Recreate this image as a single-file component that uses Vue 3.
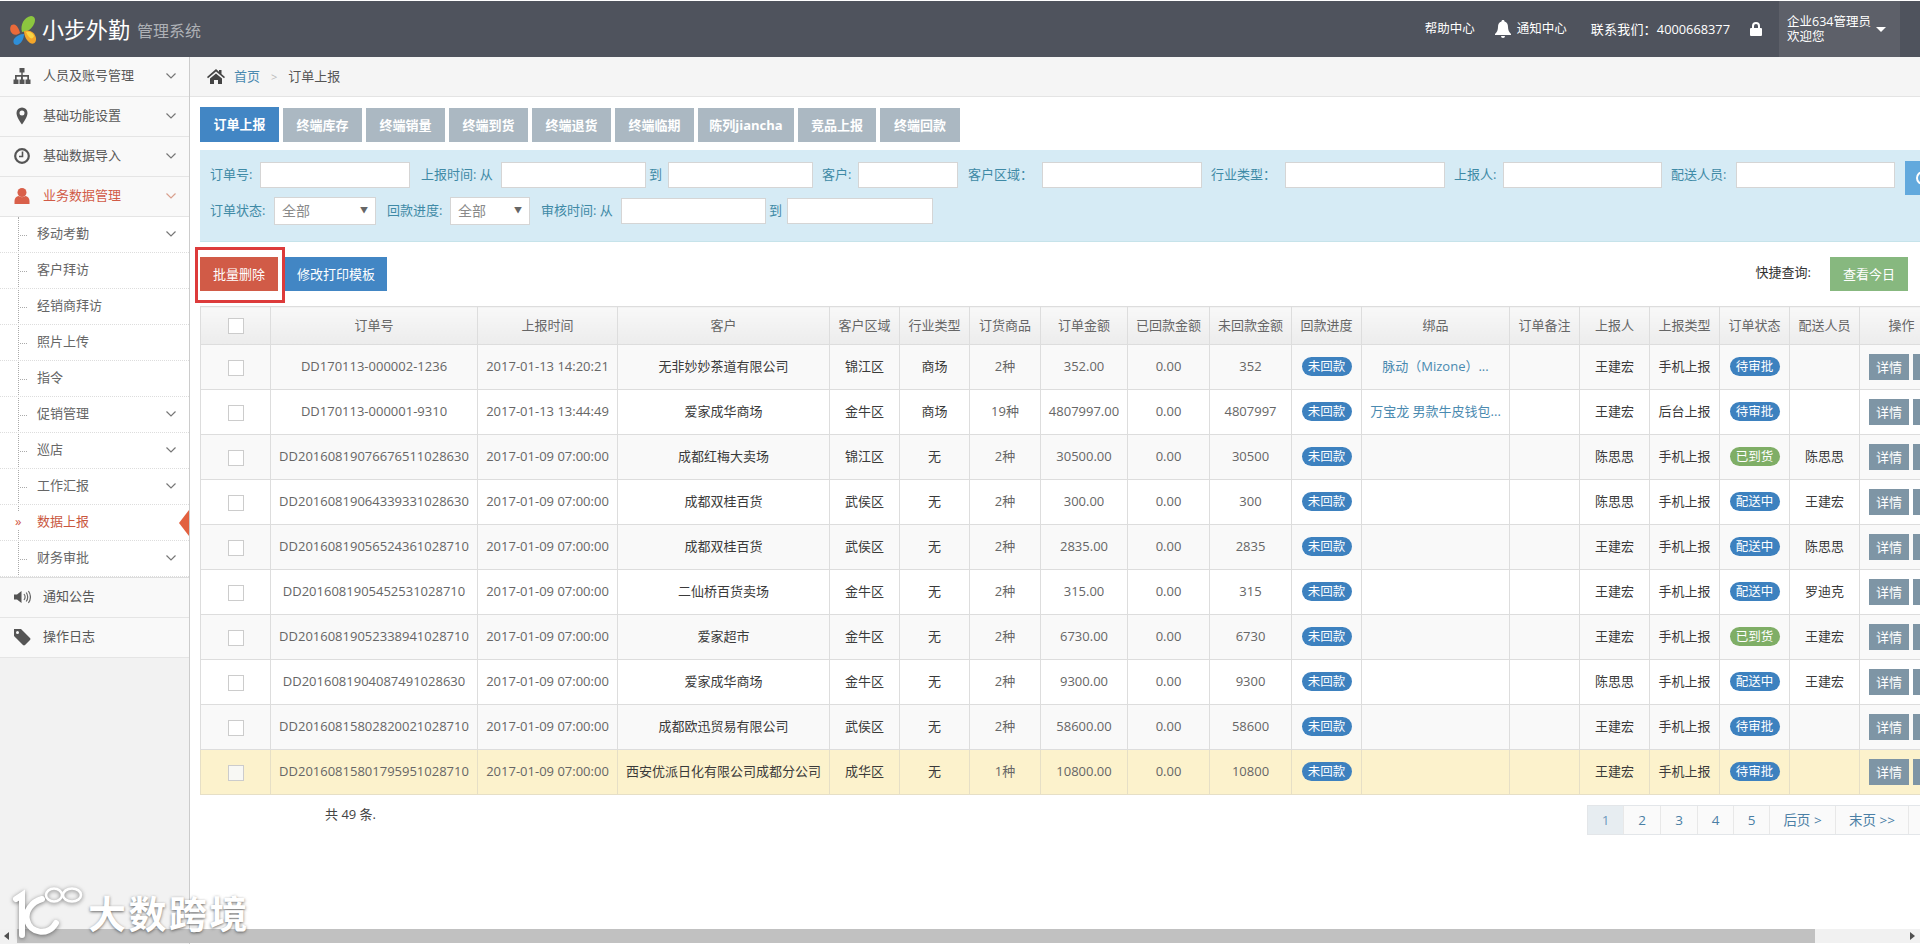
<script setup>
const sideTop = [
  { t: '人员及账号管理', i: 'org' },
  { t: '基础功能设置', i: 'pin' },
  { t: '基础数据导入', i: 'clock' },
  { t: '业务数据管理', i: 'user', active: true }
]
const subs = [
  { t: '移动考勤', c: 1 }, { t: '客户拜访' }, { t: '经销商拜访' }, { t: '照片上传' }, { t: '指令' },
  { t: '促销管理', c: 1 }, { t: '巡店', c: 1 }, { t: '工作汇报', c: 1 }, { t: '数据上报', active: 1 }, { t: '财务审批', c: 1 }
]
const tabs = [
  { t: '订单上报', w: 79, active: 1 }, { t: '终端库存', w: 79 }, { t: '终端销量', w: 79 }, { t: '终端到货', w: 79 },
  { t: '终端退货', w: 79 }, { t: '终端临期', w: 79 }, { t: '陈列jiancha', w: 96 }, { t: '竞品上报', w: 78 }, { t: '终端回款', w: 80 }
]
const row1 = [
  { l: '订单号:', lw: 50, iw: 150, ml: 0 },
  { l: '上报时间: 从', lw: 80, iw: 145, ml: 11 },
  { l: '到', lw: 22, iw: 145, ml: 0, center: 1 },
  { l: '客户:', lw: 36, iw: 100, ml: 9 },
  { l: '客户区域：', lw: 74, iw: 160, ml: 10 },
  { l: '行业类型：', lw: 74, iw: 160, ml: 9 },
  { l: '上报人:', lw: 49, iw: 159, ml: 9 },
  { l: '配送人员:', lw: 65, iw: 159, ml: 9 }
]
const cols = [70, 207, 140, 212, 70, 70, 71, 87, 82, 82, 70, 148, 70, 70, 70, 70, 70, 84]
const heads = ['', '订单号', '上报时间', '客户', '客户区域', '行业类型', '订货商品', '订单金额', '已回款金额', '未回款金额', '回款进度', '绑品', '订单备注', '上报人', '上报类型', '订单状态', '配送人员', '操作']
const rows = [
  ['DD170113-000002-1236', '2017-01-13 14:20:21', '无非妙妙茶道有限公司', '锦江区', '商场', '2种', '352.00', '352', '脉动（Mizone）...', '王建宏', '手机上报', '待审批', ''],
  ['DD170113-000001-9310', '2017-01-13 13:44:49', '爱家成华商场', '金牛区', '商场', '19种', '4807997.00', '4807997', '万宝龙 男款牛皮钱包...', '王建宏', '后台上报', '待审批', ''],
  ['DD20160819076676511028630', '2017-01-09 07:00:00', '成都红梅大卖场', '锦江区', '无', '2种', '30500.00', '30500', '', '陈思思', '手机上报', '已到货', '陈思思'],
  ['DD20160819064339331028630', '2017-01-09 07:00:00', '成都双桂百货', '武侯区', '无', '2种', '300.00', '300', '', '陈思思', '手机上报', '配送中', '王建宏'],
  ['DD20160819056524361028710', '2017-01-09 07:00:00', '成都双桂百货', '武侯区', '无', '2种', '2835.00', '2835', '', '王建宏', '手机上报', '配送中', '陈思思'],
  ['DD2016081905452531028710', '2017-01-09 07:00:00', '二仙桥百货卖场', '金牛区', '无', '2种', '315.00', '315', '', '王建宏', '手机上报', '配送中', '罗迪克'],
  ['DD20160819052338941028710', '2017-01-09 07:00:00', '爱家超市', '金牛区', '无', '2种', '6730.00', '6730', '', '王建宏', '手机上报', '已到货', '王建宏'],
  ['DD2016081904087491028630', '2017-01-09 07:00:00', '爱家成华商场', '金牛区', '无', '2种', '9300.00', '9300', '', '陈思思', '手机上报', '配送中', '王建宏'],
  ['DD20160815802820021028710', '2017-01-09 07:00:00', '成都欧迅贸易有限公司', '武侯区', '无', '2种', '58600.00', '58600', '', '王建宏', '手机上报', '待审批', ''],
  ['DD20160815801795951028710', '2017-01-09 07:00:00', '西安优派日化有限公司成都分公司', '成华区', '无', '1种', '10800.00', '10800', '', '王建宏', '手机上报', '待审批', '']
]
const pages = [
  { t: '1', w: 36, on: 1 }, { t: '2', w: 37 }, { t: '3', w: 37 }, { t: '4', w: 36 }, { t: '5', w: 36 },
  { t: '后页 >', w: 66 }, { t: '末页 >>', w: 73 }, { t: '每页', w: 60 }
]
</script>

<template>
  <div class="page">
    <header class="top">
      <div class="brand">
        <svg class="logo" viewBox="0 0 30 34" width="30" height="34">
          <path d="M13 19C11 12 15 4 22 3c4 0 5 4 3 8-2 5-7 8-12 8z" fill="#8cc63f" />
          <path d="M11 20c-4 3-8 2-9.500-2C0.500 14 2 11 5 11.500c3 .5 5 4.500 6 8.500z" fill="#ea6a3a" />
          <path d="M15 21c0 5-3 10-7 11-3 0-4.500-3-3-6 2-3 6-5 10-5z" fill="#2f8fd8" />
          <path d="M15 18c5-2 11 1 12 7 .5 4-2 7-6 5-3-2-6-7-6-12z" fill="#f4a62a" />
          <path d="M17 19c4-1 7 1 8 4-1 3-3 3-5 1-1-1-2-3-3-5z" fill="#f8d444" />
        </svg>
        <span class="brand-name">小步外勤</span>
        <span class="brand-sub">管理系统</span>
      </div>
      <div class="top-right">
        <span class="tl help">帮助中心</span>
        <svg class="bell" viewBox="0 0 16 18" width="16" height="18"><path fill="#fff" d="M8 0c1 0 1.500.6 1.500 1.400C12 2 13 4 13 7c0 3 1 5 3 7v1H0v-1c2-2 3-4 3-7 0-3 1-5 3.500-5.600C6.500.6 7 0 8 0zM6 16h4a2 2 0 0 1-4 0z"/></svg>
        <span class="tl notice">通知中心</span>
        <span class="tl contact">联系我们：<b class="tel">4000668377</b></span>
        <svg class="lock" viewBox="0 0 12 14" width="12" height="14"><path fill="#fff" d="M2 6V4a4 4 0 0 1 8 0v2h1a1 1 0 0 1 1 1v6a1 1 0 0 1-1 1H1a1 1 0 0 1-1-1V7a1 1 0 0 1 1-1zm2 0h4V4a2 2 0 0 0-4 0z"/></svg>
        <div class="user">
          <div class="user-text"><div>企业634管理员</div><div>欢迎您</div></div>
          <i class="caret"></i>
        </div>
      </div>
    </header>

    <div class="body">
      <aside class="side">
        <div v-for="s in sideTop" :key="s.t" class="s-item" :class="{ on: s.active }">
          <svg class="s-icon" viewBox="0 0 18 18" width="18" height="18">
            <path v-if="s.i === 'org'" fill="#555" d="M6.500 1h5v4.500H9.700V8H16v4.500h1.500V17h-5v-4.500H14.300V9.800H9.900v2.700h1.600V17h-5v-4.500h1.500V9.800H3.700v2.700h1.800V17h-5v-4.500H2V8h6.300V5.500H6.500z"/>
            <path v-else-if="s.i === 'pin'" fill="#555" fill-rule="evenodd" d="M9 0.500a5.500 5.500 0 0 1 5.500 5.500c0 3.500-3 8-5.500 11.500C6.500 14 3.500 9.500 3.500 6A5.500 5.500 0 0 1 9 0.500zm0 3a2.500 2.500 0 1 0 0 5 2.500 2.500 0 0 0 0-5z"/>
            <g v-else-if="s.i === 'clock'"><circle cx="9" cy="9" r="6.800" fill="none" stroke="#555" stroke-width="2.200"/><path d="M9.500 4.500v5H6" fill="none" stroke="#555" stroke-width="1.600"/></g>
            <g v-else fill="#d9604a"><circle cx="9" cy="5.500" r="4.500"/><path d="M1.500 17v-3c0-3 2-4.500 4-5 2 1.500 5 1.500 7 0 2 .5 4 2 4 5v3z"/></g>
          </svg>
          <span class="s-text">{{ s.t }}</span>
          <svg class="chev" viewBox="0 0 10 6" width="10" height="6"><path d="M0.500.5 5 5l4.500-4.500" fill="none" :stroke="s.active ? '#d9a18f' : '#777'" stroke-width="1.200"/></svg>
        </div>
        <div class="subs">
          <div v-for="s in subs" :key="s.t" class="sub" :class="{ on: s.active }">
            <i v-if="!s.active" class="tick"></i>
            <i v-else class="raquo">»</i>
            <span>{{ s.t }}</span>
            <svg v-if="s.c" class="chev" viewBox="0 0 10 6" width="10" height="6"><path d="M0.500.5 5 5l4.500-4.500" fill="none" stroke="#777" stroke-width="1.200"/></svg>
            <i v-if="s.active" class="pointer"></i>
          </div>
        </div>
        <div class="s-item">
          <svg class="s-icon" viewBox="0 0 18 18" width="18" height="18"><path fill="#555" d="M1 6.500h3L8.500 3v12L4 11.500H1z"/><path d="M11 6c1.200 1.600 1.200 4.400 0 6M13.200 4.500c2 2.500 2 6.500 0 9M15.400 3c2.700 3.500 2.700 8.500 0 12" fill="none" stroke="#666" stroke-width="1.200"/></svg>
          <span class="s-text">通知公告</span>
        </div>
        <div class="s-item">
          <svg class="s-icon" viewBox="0 0 18 18" width="18" height="18"><path fill="#555" fill-rule="evenodd" d="M1 1h7l9 9c.6.600.6 1.400 0 2l-5 5c-.6.600-1.400.6-2 0L1 8zm3.500 2a1.500 1.500 0 1 0 0 3 1.500 1.500 0 0 0 0-3z"/></svg>
          <span class="s-text">操作日志</span>
        </div>
      </aside>

      <main class="main">
        <div class="crumb">
          <svg class="home" viewBox="0 0 18 15" width="18" height="15"><path fill="#444" d="M9 0 12 2.700V1h2.500v4L18 8l-1 1.200L9 2.500 1 9.200 0 8zM3 9.500 9 4.500l6 5V15h-4v-4H7v4H3z"/></svg>
          <span class="crumb-link">首页</span>
          <span class="crumb-sep">&gt;</span>
          <span class="crumb-cur">订单上报</span>
        </div>

        <div class="content">
          <div class="tabs">
            <span v-for="t in tabs" :key="t.t" class="tab" :class="{ on: t.active }" :style="{ width: t.w + 'px' }">{{ t.t }}</span>
          </div>

          <div class="filter">
            <div class="f-row">
              <div v-for="f in row1" :key="f.l" class="field" :style="{ marginLeft: f.ml + 'px' }">
                <label :class="{ mid: f.center }" :style="{ width: f.lw + 'px' }">{{ f.l }}</label>
                <input class="inp" type="text" :style="{ width: f.iw + 'px' }" />
              </div>
              <span class="query"><i class="q-glyph"></i></span>
            </div>
            <div class="f-row two">
              <div class="field"><label class="lb64">订单状态:</label><span class="sel w100">全部<i>▼</i></span></div>
              <div class="field g11"><label class="lb63">回款进度:</label><span class="sel w80">全部<i>▼</i></span></div>
              <div class="field g11"><label class="lb80">审核时间: 从</label><input class="inp wd145" type="text" /></div>
              <div class="field"><label class="lb21 mid">到</label><input class="inp wd146" type="text" /></div>
            </div>
          </div>

          <div class="actions">
            <div class="act-left">
              <span class="btn red">批量删除</span>
              <span class="btn blue">修改打印模板</span>
              <i class="outline"></i>
            </div>
            <div class="act-right">
              <span class="quick">快捷查询:</span>
              <span class="btn green">查看今日</span>
            </div>
          </div>

          <table class="grid">
            <colgroup><col v-for="(c, i) in cols" :key="i" :style="{ width: c + 'px' }" /></colgroup>
            <thead>
              <tr><th v-for="(h, i) in heads" :key="i"><i v-if="i === 0" class="cb"></i>{{ h }}</th></tr>
            </thead>
            <tbody>
              <tr v-for="(r, i) in rows" :key="r[0]" :class="{ odd: i % 2 === 0, hl: i === 9 }">
                <td class="cb-cell"><i class="cb"></i></td>
                <td class="g">{{ r[0] }}</td>
                <td class="g">{{ r[1] }}</td>
                <td class="k">{{ r[2] }}</td>
                <td class="k">{{ r[3] }}</td>
                <td class="k">{{ r[4] }}</td>
                <td class="g">{{ r[5] }}</td>
                <td class="g">{{ r[6] }}</td>
                <td class="g">0.00</td>
                <td class="g">{{ r[7] }}</td>
                <td><span class="pill blue-p">未回款</span></td>
                <td class="lnk">{{ r[8] }}</td>
                <td></td>
                <td class="k">{{ r[9] }}</td>
                <td class="k">{{ r[10] }}</td>
                <td><span class="pill" :class="r[11] === '已到货' ? 'green-p' : 'blue-p'">{{ r[11] }}</span></td>
                <td class="k">{{ r[12] }}</td>
                <td class="ops"><span class="op">详情</span><span class="op"></span></td>
              </tr>
            </tbody>
          </table>

          <div class="foot">
            <span class="total">共 49 条.</span>
            <div class="pager">
              <span v-for="p in pages" :key="p.t" class="pg" :class="{ on: p.on }" :style="{ width: p.w + 'px' }">{{ p.t }}</span>
            </div>
          </div>
        </div>
      </main>
    </div>

    <div class="watermark">
      <svg viewBox="0 0 76 54" width="76" height="54" class="wm-logo">
        <g fill="none" stroke="#fff" stroke-linecap="round">
          <path d="M4 13l6-4v40" stroke-width="6"/>
          <path d="M30 13C19 16 13 26 15 34c3 13 21 17 29 3" stroke-width="6"/>
          <ellipse cx="42" cy="9" rx="8" ry="6.500" stroke-width="2.600"/>
          <ellipse cx="60" cy="9" rx="9" ry="6.500" stroke-width="2.600"/>
        </g>
      </svg>
      <span>大数跨境</span>
    </div>

    <div class="sbar">
      <span class="sb-arrow left"></span>
      <span class="sb-thumb"></span>
      <span class="sb-arrow right"></span>
    </div>
  </div>
</template>

<style>
html, body { margin: 0; overflow: hidden; background: #fff; }
</style>

<style scoped>
.page {
  position: relative;
  width: 1920px;
  height: 944px;
  overflow: hidden;
  display: flex;
  flex-direction: column;
  padding-top: 1px;
  box-sizing: border-box;
  font: 13px/1.4 "Open Sans", "Noto Sans CJK SC", sans-serif;
  color: #444;
  background: #fff;
}
i { font-style: normal; }

.top { height: 56px; flex: none; background: #4f535d; display: flex; justify-content: space-between; }
.brand { display: flex; align-items: center; padding-left: 9px; }
.logo { margin: 1px 3px 0 0; }
.brand-name { color: #fff; font-size: 22px; line-height: 28px; margin-top: -1px; }
.brand-sub { color: #aeb1b6; font-size: 16px; margin: 5px 0 0 7px; }
.top-right { display: flex; align-items: center; color: #fff; }
.tl { font-size: 12.5px; }
.help { margin-right: 20px; }
.bell { margin-right: 6px; }
.notice { margin-right: 24px; }
.contact { margin-right: 20px; font-size: 13px; letter-spacing: .2px; }
.tel { font-weight: 400; font-size: 12.8px; letter-spacing: 0; }
.lock { margin-right: 17px; }
.user { width: 121px; height: 56px; box-sizing: border-box; margin-right: 20px; padding-left: 8px; background: #5d6069; display: flex; align-items: center; }
.user-text { font-size: 12.5px; line-height: 15px; width: 89px; margin-top: -1px; white-space: nowrap; }
.caret { width: 0; height: 0; border: 5px solid transparent; border-top: 5px solid #fff; border-bottom: 0; }

.body { flex: 1; display: flex; min-height: 0; }
.side { width: 189px; flex: none; background: #f2f2f2; border-right: 1px solid #ccc; }
.s-item { height: 40px; box-sizing: border-box; border-bottom: 1px solid #e5e5e5; background: #f9f9f9; display: flex; align-items: center; padding: 0 0 2px 13px; color: #585858; position: relative; }
.s-item.on { color: #d15b47; }
.s-icon { flex: none; margin-right: 12px; }
.chev { position: absolute; left: 166px; top: 50%; margin-top: -4px; }
.subs { background: #fff; position: relative; border-bottom: 1px solid #ddd; height: 360px; }
.subs::before { content: ""; position: absolute; left: 18px; top: 0; bottom: 0; border-left: 1px dotted #aaa; }
.sub { height: 36px; box-sizing: border-box; position: relative; display: flex; align-items: center; padding: 0 0 2px 37px; border-bottom: 1px dotted #ddd; color: #666; }
.sub.on { color: #c9573e; }
.tick { position: absolute; left: 20px; top: 50%; width: 7px; border-top: 1px dotted #aaa; }
.raquo { position: absolute; left: 15px; top: 7px; color: #d15b47; font-size: 13px; background: #fff; line-height: 18px; }
.pointer { position: absolute; right: 0; top: 5px; width: 0; height: 0; border: 13px solid transparent; border-right: 10px solid #e2603f; border-left: 0; }

.main { flex: 1; min-width: 0; }
.crumb { height: 40px; box-sizing: border-box; background: #f5f5f5; border-bottom: 1px solid #e4e4e4; display: flex; align-items: center; padding-left: 17px; }
.home { margin-right: 9px; }
.crumb-link { color: #4a8ab0; }
.crumb-sep { margin: 0 11px 0 11px; color: #bbb; font-size: 11px; }
.crumb-cur { color: #555; }

.content { padding: 10px 0 0 10px; }
.tabs { display: flex; align-items: flex-end; gap: 4px; height: 35px; }
.tab { height: 34px; display: flex; align-items: center; justify-content: center; background: #abb8c2; color: #fff; font-weight: 700; font-size: 13px; }
.tab.on { height: 35px; background: #4286c4; }

.filter { margin-top: 8px; height: 92px; box-sizing: border-box; background: #d6ebf5; border-bottom: 1px solid #c6e3ea; padding: 12px 0 0 10px; color: #3f8aa6; }
.f-row { display: flex; align-items: center; height: 26px; white-space: nowrap; position: relative; }
.f-row.two { margin-top: 9px; height: 28px; }
.field { display: flex; align-items: center; flex: none; }
.field label { flex: none; white-space: nowrap; padding-bottom: 1px; }
.field label.mid { padding-left: 3px; box-sizing: border-box; }
.inp { height: 26px; box-sizing: border-box; padding: 0; border: 1px solid #d5d5d5; background: #fff; outline: 0; flex: none; }
.wd145 { width: 145px; }
.wd146 { width: 146px; }
.lb64 { width: 64px; }
.lb63 { width: 63px; }
.lb80 { width: 80px; }
.lb21 { width: 21px; }
.g11 { margin-left: 11px; }
.sel { height: 28px; box-sizing: border-box; border: 1px solid #d5d5d5; background: #fff; color: #8a8a8a; display: flex; align-items: center; justify-content: space-between; padding: 0 7px; font-size: 14px; }
.sel i { font-size: 8px; color: #666; margin-top: -3px; }
.w100 { width: 102px; }
.w80 { width: 80px; }
.query { position: absolute; left: 1695px; top: -1px; width: 60px; height: 34px; background: #62a9dd; display: flex; align-items: center; padding-left: 11px; box-sizing: border-box; }
.q-glyph { width: 10px; height: 10px; border: 2px solid #fff; border-radius: 50%; flex: none; }

.actions { display: flex; justify-content: space-between; align-items: flex-start; height: 64px; padding-top: 15px; box-sizing: border-box; padding-right: 12px; }
.act-left { display: flex; gap: 7px; position: relative; }
.outline { position: absolute; left: -5px; top: -10px; width: 90px; height: 56px; box-sizing: border-box; border: 3px solid #dd3b3b; }
.act-right { display: flex; align-items: flex-start; }
.btn { height: 34px; display: flex; align-items: center; justify-content: center; color: #fff; font-size: 13px; }
.red { width: 78px; background: #d15b47; }
.blue { width: 102px; background: #4286c4; }
.green { width: 78px; background: #87b87f; }
.quick { color: #333; margin: 6px 19px 0 0; }

.grid { table-layout: fixed; width: 1743px; border-collapse: collapse; margin-top: 0; }
.grid th, .grid td { border: 1px solid #ddd; text-align: center; padding: 0 0 1px; white-space: nowrap; overflow: visible; }
.grid th { height: 38px; background: linear-gradient(#f8f8f8, #ececec); color: #666; font-weight: 400; box-sizing: border-box; }
.grid td { height: 45px; box-sizing: border-box; }
.grid td.cb-cell { padding: 0; }
.grid tr.odd td { background: #f9f9f9; }
.grid tr.hl td { background: #fcf2cc; border-color: #e6dfc6; }
.cb { display: inline-block; width: 16px; height: 16px; box-sizing: border-box; border: 1px solid #ccc; background: #fff; vertical-align: middle; }
.hl .cb { background: #f8f8f4; }
.g { color: #666; }
.k { color: #3a3a3a; }
.lnk { color: #4a8ab0; }
.pill { display: inline-block; width: 50px; height: 19px; line-height: 19px; border-radius: 10px; color: #fff; font-size: 12.5px; }
.blue-p { background: #3d81bf; }
.green-p { background: #7fae66; }
.grid td.ops { text-align: left; padding: 0 0 0 9px; }
.op { display: inline-block; width: 40px; height: 26px; line-height: 26px; margin-right: 4px; background: #7e95a5; color: #fff; text-align: center; vertical-align: middle; }

.foot { display: flex; justify-content: space-between; align-items: flex-start; padding-top: 10px; }
.total { margin: 0 0 0 125px; color: #444; }
.pager { display: flex; height: 30px; margin-right: -50px; border: 1px solid #e3e6e9; box-sizing: border-box; background: #fafafa; margin-left: auto; }
.pg { display: flex; align-items: center; justify-content: center; box-sizing: border-box; border-right: 1px solid #e8e8e8; color: #4a7fa5; flex: none; font-size: 13.5px; }
.pg.on { background: #e7edf1; color: #6d9ac0; }

.watermark { position: absolute; left: 12px; top: 886px; z-index: 2; display: flex; align-items: flex-start; color: #fff; font-size: 38px; font-weight: 700; line-height: 42px; font-family: "Noto Sans CJK SC", sans-serif; text-shadow: 0 1px 3px rgba(70, 70, 70, .8); letter-spacing: 2.5px; }
.watermark span { margin-top: 5px; }
.wm-logo { margin-right: 0; filter: drop-shadow(0 1px 2px rgba(70, 70, 70, .7)); }

.sbar { position: absolute; left: 0; right: 0; top: 929px; height: 14px; background: #f1f1f1; display: flex; }
.sb-arrow { width: 17px; flex: none; position: relative; }
.sb-arrow::after { content: ""; position: absolute; top: 3px; width: 0; height: 0; border: 4px solid transparent; }
.left::after { left: 4px; border-right: 5px solid #505050; border-left: 0; }
.right::after { left: 7px; border-left: 5px solid #505050; border-right: 0; }
.sb-thumb { width: 1798px; flex: none; background: #c1c1c1; margin-right: auto; }
</style>
